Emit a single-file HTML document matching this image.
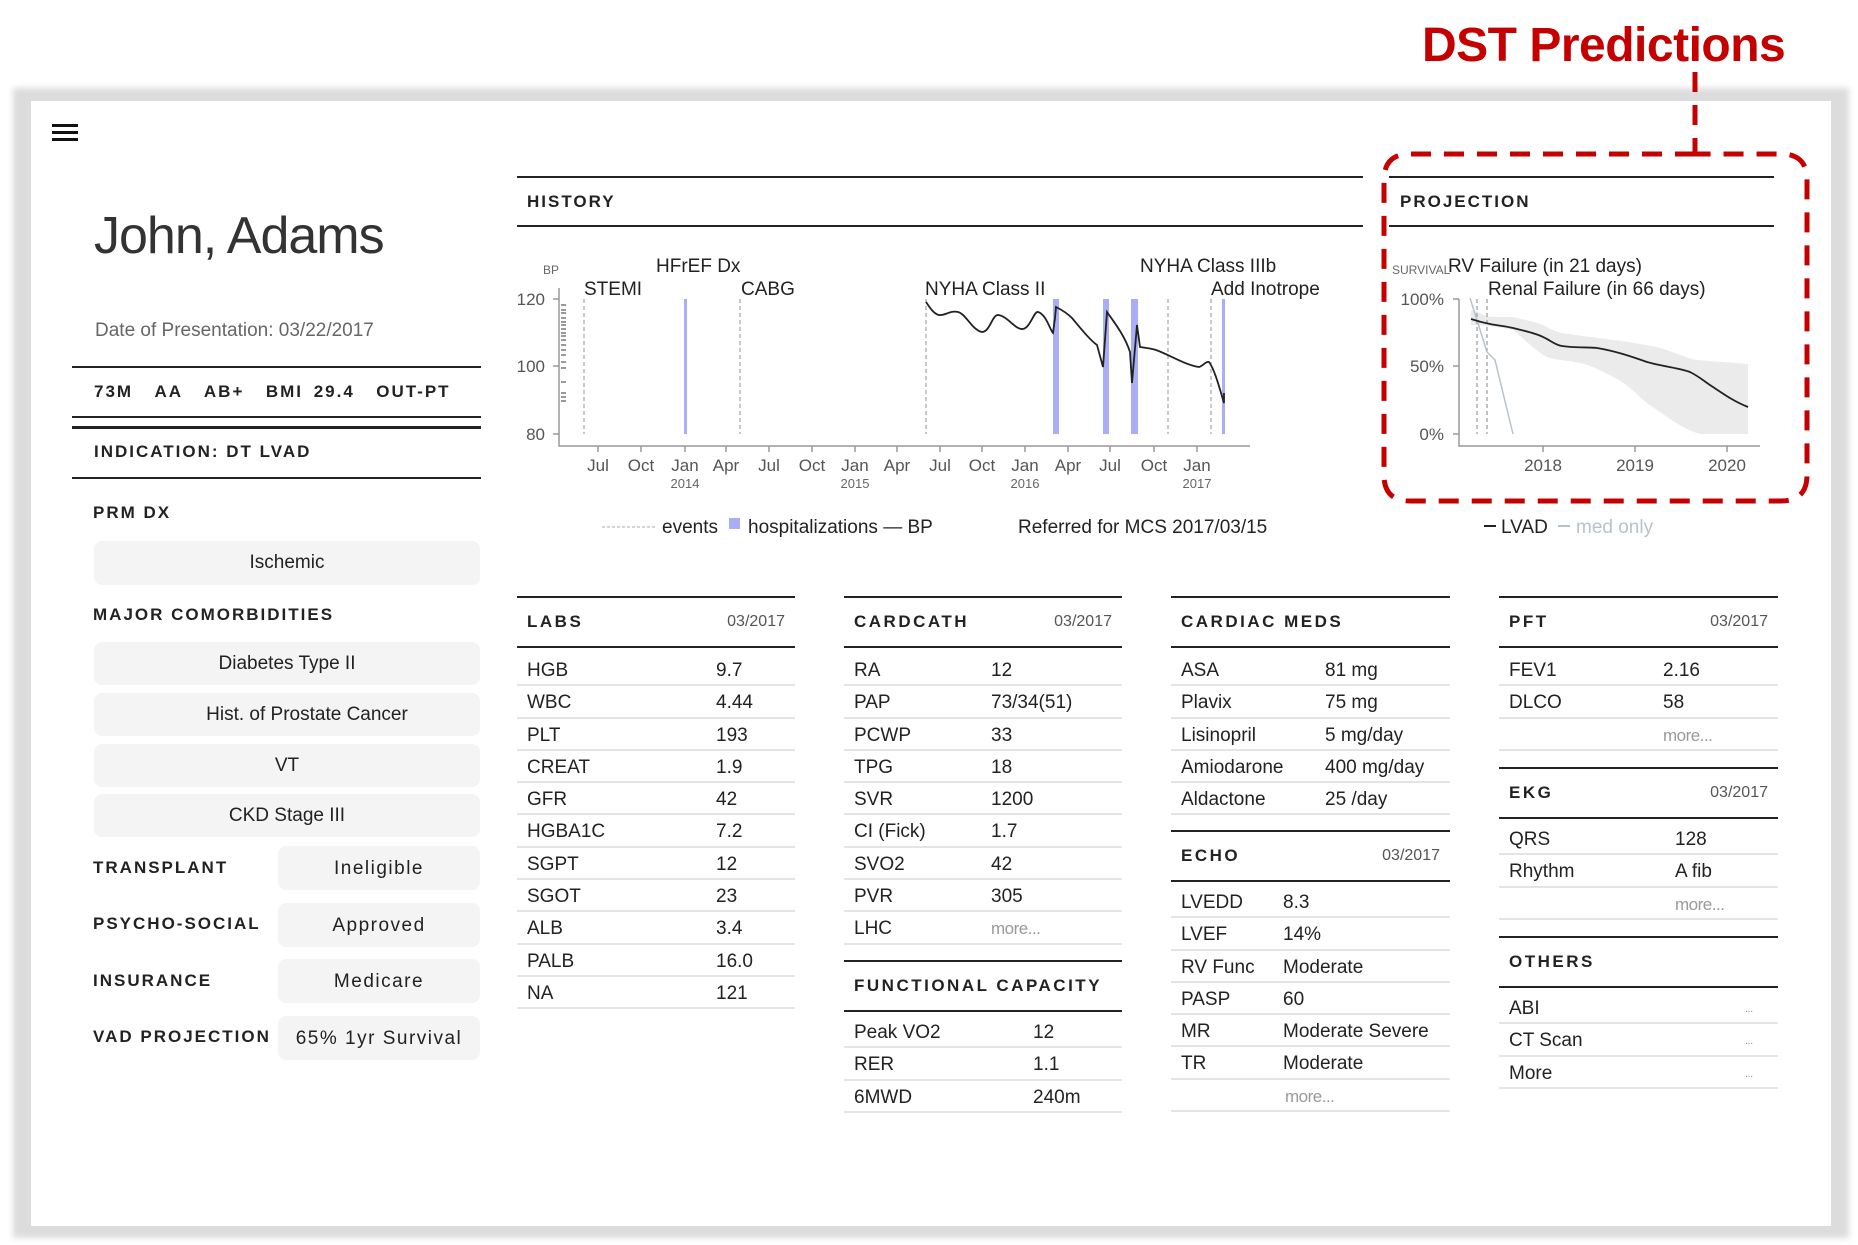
<!DOCTYPE html>
<html><head><meta charset="utf-8"><style>
*{margin:0;padding:0;box-sizing:border-box}
body{width:1858px;height:1245px;background:#fff;position:relative;overflow:hidden;font-family:"Liberation Sans",sans-serif;color:#222}
.frame{position:absolute;left:13px;top:88px;width:1836px;height:1150px;background:#dcdcdc;filter:blur(3px)}
.inner{position:absolute;left:31px;top:101px;width:1800px;height:1125px;background:#fff}
.a{position:absolute;white-space:nowrap}
.lbl{font-weight:bold;font-size:17px;letter-spacing:2px;color:#222}
.hr{position:absolute;height:2px;background:#222}
.pill{position:absolute;background:#f4f4f4;border-radius:8px;font-size:19px;text-align:center;color:#222}
.sec{position:absolute}
.sec .hd{height:52px;border-top:2px solid #222;border-bottom:2px solid #222;display:flex;justify-content:space-between;align-items:center;padding:0 10px}
.sec .hd b{font-size:17px;letter-spacing:2.5px}
.sec .hd span{font-size:16px;color:#555}
.sec .bd{padding-top:6px}
.sec .r{height:32.3px;border-bottom:2px solid #e4e4e4;position:relative;font-size:19px;line-height:34px;padding-left:10px}
.sec .r i{font-style:normal;position:absolute;top:0}
.sec .r .m{color:#999;font-size:17px;letter-spacing:-0.5px}
</style></head><body>
<div class="frame"></div>
<div class="inner"></div>
<div class="a" style="left:1422px;top:18px;font-size:48px;font-weight:bold;color:#c40000;letter-spacing:-0.5px">DST Predictions</div>
<svg class="a" style="left:0;top:0" width="1858" height="1245">
<rect x="52" y="124" width="26" height="3" fill="#111"/><rect x="52" y="131" width="26" height="3" fill="#111"/><rect x="52" y="138" width="26" height="3" fill="#111"/>
<path d="M1695 72 V154 M1695 154 H1410 Q1384 154 1384 180 V475 Q1384 501 1410 501 H1781 Q1807 501 1807 475 V180 Q1807 154 1781 154 H1695" fill="none" stroke="#c40000" stroke-width="5" stroke-dasharray="20 13"/>
<g font-family="Liberation Sans" >
<text x="543" y="274" font-size="12" fill="#666">BP</text>
<g font-size="17" fill="#555" text-anchor="end"><text x="545" y="305">120</text><text x="545" y="372">100</text><text x="545" y="440">80</text></g>
<path d="M559 288 V446 H1250 M553 299 H559 M553 366 H559 M553 434 H559" stroke="#999" stroke-width="1.5" fill="none"/>
<path d="M561 305h5M561 310h5M561 313h5M561 318h5M561 322h5M561 325h5M561 329h5M561 333h5M561 336h5M561 340h5M561 345h5M561 350h5M561 355h5M561 362h5M561 368h5M561 382h5M561 393h5M561 397h5M561 401h5" stroke="#333" stroke-width="1"/>
<g stroke="#999" stroke-width="1.5"><path d="M598 446v6M641 446v6M685 446v6M726 446v6M769 446v6M812 446v6M855 446v6M897 446v6M940 446v6M982 446v6M1025 446v6M1068 446v6M1110 446v6M1154 446v6M1197 446v6"/></g>
<g font-size="17" fill="#555" text-anchor="middle"><text x="598" y="471">Jul</text><text x="641" y="471">Oct</text><text x="685" y="471">Jan</text><text x="726" y="471">Apr</text><text x="769" y="471">Jul</text><text x="812" y="471">Oct</text><text x="855" y="471">Jan</text><text x="897" y="471">Apr</text><text x="940" y="471">Jul</text><text x="982" y="471">Oct</text><text x="1025" y="471">Jan</text><text x="1068" y="471">Apr</text><text x="1110" y="471">Jul</text><text x="1154" y="471">Oct</text><text x="1197" y="471">Jan</text></g>
<g font-size="13" fill="#666" text-anchor="middle"><text x="685" y="488">2014</text><text x="855" y="488">2015</text><text x="1025" y="488">2016</text><text x="1197" y="488">2017</text></g>
<g fill="#aaaef7"><rect x="684" y="299" width="3" height="135"/><rect x="1053" y="299" width="6" height="135"/><rect x="1103" y="299" width="6" height="135"/><rect x="1131" y="299" width="7" height="135"/><rect x="1222" y="299" width="3" height="135"/></g>
<g stroke="#aaa" stroke-width="1.3" stroke-dasharray="4 3"><path d="M584 299V434M740 299V434M926 299V434M1168 299V434M1211 299V434"/></g>
<path d="M926 302 C930 308 934 314 939 315 C945 316 950 310 958 312 C966 314 972 330 982 332 C990 332 992 315 998 315 C1008 316 1015 330 1023 329 C1030 328 1034 311 1038 312 C1046 314 1050 330 1053 333 L1055 318 1056 307 C1062 310 1068 314 1072 318 C1082 330 1090 340 1097 345 L1103 367 1107 312 C1114 322 1125 336 1130 352 L1132 383 1137 325 1140 347 C1146 348 1150 348 1156 350 C1170 355 1185 365 1199 367 C1203 366 1206 361 1209 362 C1215 370 1220 390 1224 403 L1224 393" fill="none" stroke="#222" stroke-width="1.8"/>
<g font-size="19" fill="#222"><text x="584" y="295">STEMI</text><text x="656" y="272">HFrEF Dx</text><text x="741" y="295">CABG</text><text x="925" y="295">NYHA Class II</text><text x="1140" y="272">NYHA Class IIIb</text><text x="1211" y="295">Add Inotrope</text></g>
<path d="M602 527H655" stroke="#aaa" stroke-dasharray="3 2"/>
<rect x="729" y="518" width="11" height="11" fill="#aaaef7"/>
<g font-size="19" fill="#222"><text x="662" y="533">events</text><text x="748" y="533">hospitalizations — BP</text><text x="1018" y="533">Referred for MCS 2017/03/15</text></g>
<text x="1392" y="274" font-size="12" fill="#666">SURVIVAL</text>
<g font-size="19" fill="#222"><text x="1448" y="272">RV Failure (in 21 days)</text><text x="1488" y="295">Renal Failure (in 66 days)</text></g>
<g font-size="17" fill="#555" text-anchor="end"><text x="1444" y="305">100%</text><text x="1444" y="372">50%</text><text x="1444" y="440">0%</text></g>
<path d="M1459 299 V446 H1760 M1453 299 H1459 M1453 366 H1459 M1453 434 H1459 M1543 446v6M1635 446v6M1727 446v6" stroke="#999" stroke-width="1.5" fill="none"/>
<g font-size="17" fill="#555" text-anchor="middle"><text x="1543" y="471">2018</text><text x="1635" y="471">2019</text><text x="1727" y="471">2020</text></g>
<path d="M1471 310 C1480 312 1485 316 1490 317 L1513 317 C1525 320 1535 322 1543 325 C1550 328 1555 332 1562 333 C1580 336 1600 338 1613 340 C1630 342 1645 345 1657 347 C1675 352 1685 358 1697 360 L1748 364 V434 H1700 C1680 428 1665 415 1647 403 C1635 393 1625 382 1613 377 C1600 370 1590 365 1580 363 C1565 360 1555 360 1547 357 C1535 350 1525 340 1513 330 C1495 326 1480 325 1471 325Z" fill="#ebebeb"/>
<path d="M1477 299V434M1487 299V434" stroke="#999" stroke-width="1.2" stroke-dasharray="4 3"/>
<path d="M1470 298 L1487 352 1495 360 1513 434" stroke="#b8c2ca" stroke-width="1.5" fill="none"/>
<path d="M1471 319 C1480 322 1485 323 1490 324 C1500 326 1505 326 1513 328 C1525 331 1535 333 1543 337 C1550 340 1555 345 1562 346 C1575 348 1590 347 1597 348 C1615 351 1630 356 1647 362 C1665 367 1680 368 1690 372 C1700 377 1705 382 1713 387 C1725 395 1735 402 1748 407" fill="none" stroke="#222" stroke-width="1.8"/>
<path d="M1484 526H1496" stroke="#222" stroke-width="2"/><text x="1501" y="533" font-size="19" fill="#222">LVAD</text>
<path d="M1558 526H1570" stroke="#b8c2ca" stroke-width="2"/><text x="1576" y="533" font-size="19" fill="#b8c2ca">med only</text>
</g>
</svg>

<div class="a" style="left:94px;top:206px;font-size:52px;color:#333;letter-spacing:-1px">John, Adams</div>
<div class="a" style="left:95px;top:320px;font-size:19px;color:#666">Date of Presentation: 03/22/2017</div>
<div class="hr" style="left:72px;top:366px;width:409px"></div>
<div class="a lbl" style="left:94px;top:382px;word-spacing:4px">73M &nbsp;AA &nbsp;AB+ &nbsp;BMI 29.4 &nbsp;OUT-PT</div>
<div class="hr" style="left:72px;top:416px;width:409px"></div>
<div class="hr" style="left:72px;top:426px;width:409px;height:3px"></div>
<div class="a lbl" style="left:94px;top:442px">INDICATION: DT LVAD</div>
<div class="hr" style="left:72px;top:477px;width:409px"></div>
<div class="a lbl" style="left:93px;top:503px">PRM DX</div>
<div class="pill" style="left:94px;top:541px;width:386px;height:44px;line-height:44px">Ischemic</div>
<div class="a lbl" style="left:93px;top:605px">MAJOR COMORBIDITIES</div>
<div class="pill" style="left:94px;top:642px;width:386px;height:43px;line-height:43px">Diabetes Type II</div>
<div class="pill" style="left:94px;top:693px;width:386px;height:43px;line-height:43px;padding-left:40px">Hist. of Prostate Cancer</div>
<div class="pill" style="left:94px;top:744px;width:386px;height:43px;line-height:43px">VT</div>
<div class="pill" style="left:94px;top:794px;width:386px;height:43px;line-height:43px">CKD Stage III</div>
<div class="a lbl" style="left:93px;top:858px">TRANSPLANT</div>
<div class="pill" style="left:278px;top:846px;width:202px;height:44px;line-height:46px;letter-spacing:1.5px">Ineligible</div>
<div class="a lbl" style="left:93px;top:914px">PSYCHO-SOCIAL</div>
<div class="pill" style="left:278px;top:903px;width:202px;height:44px;line-height:46px;letter-spacing:1.5px">Approved</div>
<div class="a lbl" style="left:93px;top:971px">INSURANCE</div>
<div class="pill" style="left:278px;top:959px;width:202px;height:44px;line-height:46px;letter-spacing:1.5px">Medicare</div>
<div class="a lbl" style="left:93px;top:1027px">VAD PROJECTION</div>
<div class="pill" style="left:278px;top:1016px;width:202px;height:44px;line-height:46px;letter-spacing:1.5px">65% 1yr Survival</div>

<div class="hr" style="left:517px;top:176px;width:846px"></div>
<div class="a lbl" style="left:527px;top:192px">HISTORY</div>
<div class="hr" style="left:517px;top:225px;width:846px"></div>
<div class="hr" style="left:1389px;top:176px;width:385px"></div>
<div class="a lbl" style="left:1400px;top:192px">PROJECTION</div>
<div class="hr" style="left:1389px;top:225px;width:385px"></div>

<div class="sec" style="left:517px;top:596px;width:278px">
<div class="hd"><b>LABS</b><span>03/2017</span></div><div class="bd">
<div class="r">HGB<i style="left:199px">9.7</i></div><div class="r">WBC<i style="left:199px">4.44</i></div><div class="r">PLT<i style="left:199px">193</i></div><div class="r">CREAT<i style="left:199px">1.9</i></div><div class="r">GFR<i style="left:199px">42</i></div><div class="r">HGBA1C<i style="left:199px">7.2</i></div><div class="r">SGPT<i style="left:199px">12</i></div><div class="r">SGOT<i style="left:199px">23</i></div><div class="r">ALB<i style="left:199px">3.4</i></div><div class="r">PALB<i style="left:199px">16.0</i></div><div class="r">NA<i style="left:199px">121</i></div>
</div></div>

<div class="sec" style="left:844px;top:596px;width:278px">
<div class="hd"><b>CARDCATH</b><span>03/2017</span></div><div class="bd">
<div class="r">RA<i style="left:147px">12</i></div><div class="r">PAP<i style="left:147px">73/34(51)</i></div><div class="r">PCWP<i style="left:147px">33</i></div><div class="r">TPG<i style="left:147px">18</i></div><div class="r">SVR<i style="left:147px">1200</i></div><div class="r">CI (Fick)<i style="left:147px">1.7</i></div><div class="r">SVO2<i style="left:147px">42</i></div><div class="r">PVR<i style="left:147px">305</i></div><div class="r">LHC<i class="m" style="left:147px">more...</i></div>
</div></div>
<div class="sec" style="left:844px;top:960px;width:278px">
<div class="hd"><b>FUNCTIONAL CAPACITY</b></div><div class="bd" style="padding-top:4px">
<div class="r">Peak VO2<i style="left:189px">12</i></div><div class="r">RER<i style="left:189px">1.1</i></div><div class="r">6MWD<i style="left:189px">240m</i></div>
</div></div>

<div class="sec" style="left:1171px;top:596px;width:279px">
<div class="hd"><b>CARDIAC MEDS</b></div><div class="bd">
<div class="r">ASA<i style="left:154px">81 mg</i></div><div class="r">Plavix<i style="left:154px">75 mg</i></div><div class="r">Lisinopril<i style="left:154px">5 mg/day</i></div><div class="r">Amiodarone<i style="left:154px">400 mg/day</i></div><div class="r">Aldactone<i style="left:154px">25 /day</i></div>
</div></div>
<div class="sec" style="left:1171px;top:830px;width:279px">
<div class="hd"><b>ECHO</b><span>03/2017</span></div><div class="bd" style="padding-top:4px">
<div class="r">LVEDD<i style="left:112px">8.3</i></div><div class="r">LVEF<i style="left:112px">14%</i></div><div class="r">RV Func<i style="left:112px">Moderate</i></div><div class="r">PASP<i style="left:112px">60</i></div><div class="r">MR<i style="left:112px">Moderate Severe</i></div><div class="r">TR<i style="left:112px">Moderate</i></div><div class="r"><i class="m" style="left:114px">more...</i></div>
</div></div>

<div class="sec" style="left:1499px;top:596px;width:279px">
<div class="hd"><b>PFT</b><span>03/2017</span></div><div class="bd">
<div class="r">FEV1<i style="left:164px">2.16</i></div><div class="r">DLCO<i style="left:164px">58</i></div><div class="r"><i class="m" style="left:164px">more...</i></div>
</div></div>
<div class="sec" style="left:1499px;top:767px;width:279px">
<div class="hd"><b>EKG</b><span>03/2017</span></div><div class="bd" style="padding-top:4px">
<div class="r">QRS<i style="left:176px">128</i></div><div class="r">Rhythm<i style="left:176px">A fib</i></div><div class="r"><i class="m" style="left:176px">more...</i></div>
</div></div>
<div class="sec" style="left:1499px;top:936px;width:279px">
<div class="hd"><b>OTHERS</b></div><div class="bd" style="padding-top:4px">
<div class="r">ABI<i class="m" style="left:246px;font-size:11px">...</i></div><div class="r">CT Scan<i class="m" style="left:246px;font-size:11px">...</i></div><div class="r">More<i class="m" style="left:246px;font-size:11px">...</i></div>
</div></div>
</body></html>
